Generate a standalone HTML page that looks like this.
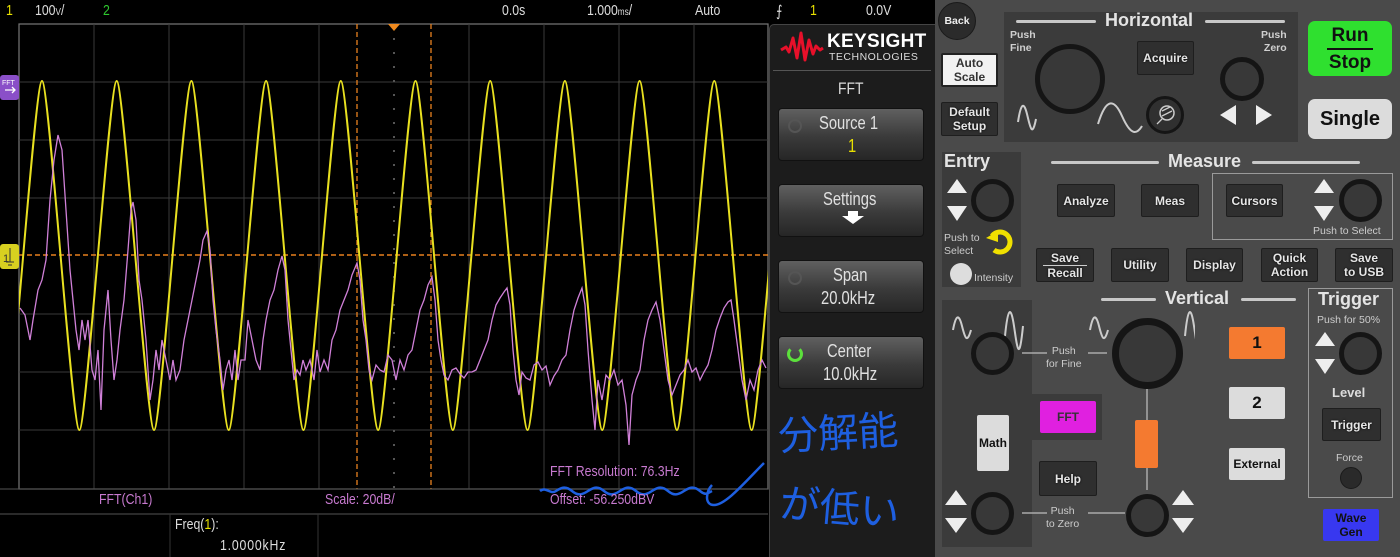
<!DOCTYPE html>
<html><head><meta charset="utf-8"><style>
*{margin:0;padding:0;box-sizing:border-box}
body{width:1400px;height:557px;overflow:hidden;background:#000;position:relative;font-family:"Liberation Sans",sans-serif}
.a{position:absolute}
.t{position:absolute;white-space:nowrap;font-family:"Liberation Sans",sans-serif;transform-origin:0 0;transform:scaleX(.82);font-size:15px}
.cp{position:absolute;left:935px;top:0;width:465px;height:557px;background:#4a4a4a}
.sub{position:absolute;background:#3b3b3b}
.btn{position:absolute;background:#2f2f2f;border:1px solid #1e1e1e;color:#e6e6e6;font-weight:bold;font-size:12px;display:flex;align-items:center;justify-content:center;text-align:center;line-height:14px;text-shadow:0 0 2px #000;border-radius:2px}
.k{position:absolute;border-radius:50%;background:#383838;border:5px solid #151515}
.lb{position:absolute;color:#cfcfcf;font-size:10.5px;font-weight:bold;text-align:center;line-height:13px;white-space:nowrap}
.ttl{position:absolute;color:#e4e4e4;font-weight:bold;font-size:18px;white-space:nowrap}
.ln{position:absolute;height:3px;background:#c8c8c8;border-radius:2px}
.sk{position:absolute;left:778px;width:146px;height:53px;border-radius:4px;background:linear-gradient(#606060,#3a3a3a 55%,#262626);border:1px solid #111;color:#e0e0e0;text-align:center;font-size:17px}
</style></head><body>

<!-- top bar -->
<div class="t" style="left:6px;top:2px;color:#e8e000">1</div>
<div class="t" style="left:35px;top:2px;color:#ddd">100<span style="font-size:10px">V</span>/</div>
<div class="t" style="left:103px;top:2px;color:#2ec82e">2</div>
<div class="t" style="left:502px;top:2px;color:#ddd">0.0s</div>
<div class="t" style="left:587px;top:2px;color:#ddd">1.000<span style="font-size:10px">ms</span>/</div>
<div class="t" style="left:695px;top:2px;color:#ddd">Auto</div>
<div class="t" style="left:776px;top:2px;color:#ddd">&#x2A0D;</div>
<div class="t" style="left:810px;top:2px;color:#e8e000">1</div>
<div class="t" style="left:866px;top:2px;color:#ddd">0.0V</div>

<svg class="a" style="left:0;top:0" width="935" height="557">
<defs><clipPath id="g"><rect x="19" y="24" width="749" height="465"/></clipPath></defs>
<rect x="19" y="24" width="749" height="465" fill="#000" stroke="#777" stroke-width="1.2"/>
<g stroke="#3a3a3a" stroke-width="1">
<path d="M94 24V489M169 24V489M244 24V489M319 24V489M469 24V489M544 24V489M619 24V489M694 24V489"/>
<path d="M19 82H768M19 140H768M19 198H768M19 314H768M19 372H768M19 430H768"/>
</g>
<path d="M394 24V489" stroke="#555" stroke-width="2" stroke-dasharray="2 12"/>
<path d="M19 255H768" stroke="#e8801e" stroke-width="1.5" stroke-dasharray="5 3"/>
<path d="M357 24V489M431 24V489" stroke="#e8801e" stroke-width="1.3" stroke-dasharray="5 3"/>
<path d="M388 24L400 24L394 31Z" fill="#f08a1e"/>
<g clip-path="url(#g)">
<path fill="none" stroke="#e8e020" stroke-width="2" d="M4.65 430 c7 0 30 -349 37.35 -349 c7 0 30 349 37.35 349 c7 0 30 -349 37.35 -349 c7 0 30 349 37.35 349 c7 0 30 -349 37.35 -349 c7 0 30 349 37.35 349 c7 0 30 -349 37.35 -349 c7 0 30 349 37.35 349 c7 0 30 -349 37.35 -349 c7 0 30 349 37.35 349 c7 0 30 -349 37.35 -349 c7 0 30 349 37.35 349 c7 0 30 -349 37.35 -349 c7 0 30 349 37.35 349 c7 0 30 -349 37.35 -349 c7 0 30 349 37.35 349 c7 0 30 -349 37.35 -349 c7 0 30 349 37.35 349 c7 0 30 -349 37.35 -349 c7 0 30 349 37.35 349 c7 0 30 -349 37.35 -349"/>
<polyline fill="none" stroke="#d080d8" stroke-width="1.3" points="20,308 25,315 30,340 33,320 38,290 42,280 46,260 50,200 54,160 58,135 62,150 66,210 70,270 73,300 76,330 79,350 82,320 85,340 88,320 92,370 95,380 98,350 101,410 104,330 108,290 111,340 114,380 117,360 120,330 124,300 128,250 131,210 133,202 136,220 139,280 142,300 146,340 150,400 153,380 156,350 159,370 162,340 166,360 170,380 173,360 176,380 180,370 184,340 188,320 192,300 196,280 200,260 203,240 207,231 210,250 213,300 216,330 220,360 223,390 226,370 229,360 232,380 235,350 238,380 241,360 245,360 248,320 252,340 256,360 260,370 263,340 266,320 270,300 274,290 278,270 282,256 285,270 288,320 291,350 294,380 297,370 300,375 303,360 306,370 310,360 314,380 317,350 320,372 324,360 328,370 332,340 336,330 340,310 344,300 348,290 352,275 357,263 360,280 363,320 366,340 369,370 372,380 376,365 380,370 384,372 388,355 392,360 396,380 400,360 404,370 408,355 412,350 416,330 420,310 424,300 428,285 432,277 435,300 438,340 441,360 444,375 448,380 452,370 456,368 460,374 464,378 468,372 472,372 476,370 480,360 484,350 488,340 492,320 496,305 500,298 504,292 507,288 510,305 513,350 516,380 519,395 522,372 526,378 530,380 534,365 538,362 542,370 546,366 550,385 554,376 558,370 562,360 566,355 570,330 574,310 578,298 582,288 585,305 588,350 592,400 595,430 598,380 602,400 606,375 610,380 614,370 618,385 622,380 626,405 629,445 632,395 636,380 640,370 644,340 648,320 652,310 656,302 660,320 664,350 668,380 672,395 676,385 680,375 684,370 688,360 692,372 696,368 700,380 704,372 708,365 712,350 716,330 720,318 724,308 728,302 731,300 734,320 738,350 742,380 746,400 750,380 754,390 758,370 762,360 766,368"/>
</g>
<!-- markers -->
<rect x="0" y="75" width="19" height="25" rx="3" fill="#8a4fc8"/>
<path d="M5 90H15M12 87L15 90L12 93" stroke="#fff" stroke-width="1.3" fill="none"/>
<text x="2" y="85" font-size="7" fill="#fff" font-family="Liberation Sans">FFT</text>
<rect x="0" y="244" width="19" height="25" rx="3" fill="#d8d020"/>
<text x="3" y="262" font-size="11" fill="#333" font-family="Liberation Sans">1</text>
<path d="M10 248V262M6 262H14M8 265H12" stroke="#333" stroke-width="1"/>
<!-- bottom rows -->
<path d="M0 489H768M0 514H768" stroke="#555" stroke-width="1"/>
<path d="M170 514V557M318 514V557" stroke="#333"/>
<!-- blue handwriting squiggle -->
<path d="M540 491c6-5 10 4 16 0s10-5 16 0 10 4 16 0 10-5 16 0 10 4 16 0 10-5 16 0 10 4 16 0 10-5 16 0 10 4 16 0 10-5 16 0 8 2 12 0" stroke="#1e5fe0" stroke-width="2.5" fill="none"/>
<path d="M712 485c-6 6-8 20 2 20 12 0 32-24 50-42" stroke="#1e5fe0" stroke-width="2.5" fill="none"/>
</svg>

<div class="t" style="left:550px;top:463px;color:#c87ad0;font-size:15px">FFT Resolution: 76.3Hz</div>
<div class="t" style="left:99px;top:491px;color:#c87ad0">FFT(Ch1)</div>
<div class="t" style="left:325px;top:491px;color:#c87ad0">Scale: 20dB/</div>
<div class="t" style="left:550px;top:491px;color:#c87ad0">Offset: -56.250dBV</div>
<div class="t" style="left:175px;top:516px;color:#ddd">Freq(<span style="color:#e8e000">1</span>):</div>
<div class="t" style="left:220px;top:537px;color:#ddd;letter-spacing:1px">1.0000kHz</div>

<!-- softkey panel -->
<div class="a" style="left:769px;top:24px;width:166px;height:533px;background:#1c1c1c;border-left:1px solid #444;border-top:1px solid #444;border-radius:5px 0 0 0"></div>
<svg class="a" style="left:780px;top:30px" width="44" height="34"><path d="M1 20L6 17L9 22L13 8L17 28L21 3L25 30L29 10L33 24L36 16L40 20L43 18" stroke="#e8102a" stroke-width="3" fill="none" stroke-linejoin="round"/></svg>
<div class="a" style="left:827px;top:31px;color:#fff;font-weight:bold;font-size:19px;letter-spacing:0.3px">KEYSIGHT</div>
<div class="a" style="left:829px;top:51px;color:#ddd;font-size:10.5px;letter-spacing:0.5px">TECHNOLOGIES</div>
<div class="a" style="left:773px;top:70px;width:158px;height:1px;background:#555"></div>
<div class="t" style="left:838px;top:79px;color:#ddd;font-size:17px">FFT</div>
<div class="sk" style="top:108px"><div class="t" style="left:40px;top:4px;font-size:18px">Source 1</div><div class="t" style="left:69px;top:27px;font-size:18px;color:#e8e000">1</div><div class="a" style="left:9px;top:10px;width:14px;height:14px;border:2px solid #555;border-radius:50%"></div></div>
<div class="sk" style="top:184px"><div class="t" style="left:44px;top:4px;font-size:18px">Settings</div><div class="a" style="left:63px;top:31px;width:0;height:0;border-left:11px solid transparent;border-right:11px solid transparent;border-top:8px solid #fff"></div><div class="a" style="left:69px;top:26px;width:10px;height:6px;background:#fff"></div></div>
<div class="sk" style="top:260px"><div class="t" style="left:54px;top:4px;font-size:18px">Span</div><div class="t" style="left:42px;top:27px;font-size:18px">20.0kHz</div><div class="a" style="left:9px;top:10px;width:14px;height:14px;border:2px solid #555;border-radius:50%"></div></div>
<div class="sk" style="top:336px"><div class="t" style="left:48px;top:4px;font-size:18px">Center</div><div class="t" style="left:44px;top:27px;font-size:18px">10.0kHz</div><div class="a" style="left:8px;top:9px;width:16px;height:16px;border:3px solid #5ce03c;border-top-color:transparent;border-radius:50%"></div></div>
<div class="a" style="left:778px;top:405px;color:#1e5fe0;font-family:'Noto Sans CJK JP',sans-serif;font-size:40px;line-height:50px;transform:rotate(-3deg)">分解能</div>
<div class="a" style="left:780px;top:480px;color:#1e5fe0;font-family:'Noto Sans CJK JP',sans-serif;font-size:40px;line-height:50px;transform:rotate(5deg)">が低い</div>

<!-- control panel -->
<div class="cp"></div>
<div class="a" style="left:938px;top:2px;width:38px;height:38px;border-radius:50%;background:#2b2b2b;border:1px solid #1a1a1a"></div>
<div class="lb" style="left:938px;top:15px;width:38px;color:#eee">Back</div>
<div class="btn" style="left:941px;top:53px;width:57px;height:34px;background:#f2f2f2;color:#333;text-shadow:none;border:2px solid #222">Auto<br>Scale</div>
<div class="btn" style="left:941px;top:102px;width:57px;height:34px">Default<br>Setup</div>

<div class="sub" style="left:1004px;top:12px;width:294px;height:130px"></div>
<div class="ln" style="left:1016px;top:20px;width:80px"></div><div class="ln" style="left:1205px;top:20px;width:80px"></div>
<div class="ttl" style="left:1105px;top:10px">Horizontal</div>
<div class="lb" style="left:1010px;top:29px;text-align:left">Push<br>Fine</div>
<div class="k" style="left:1035px;top:44px;width:70px;height:70px"></div>
<div class="btn" style="left:1137px;top:41px;width:57px;height:34px">Acquire</div>
<div class="lb" style="left:1261px;top:29px;text-align:right">Push<br>Zero</div>
<div class="k" style="left:1220px;top:57px;width:44px;height:44px"></div>
<div class="k" style="left:1146px;top:96px;width:38px;height:38px;border-width:3px;background:#303030"></div>
<svg class="a" style="left:1004px;top:12px" width="294" height="130">
<path d="M14 110c3-20 6-20 9-8s5 25 9 5" stroke="#ccc" stroke-width="2" fill="none"/>
<path d="M94 112c8-26 16-26 24-8s14 20 20 10" stroke="#ccc" stroke-width="2" fill="none"/>
<circle cx="163" cy="101" r="7" stroke="#ccc" stroke-width="1.5" fill="none"/><path d="M158 107l-5 5M158 99l8-4M158 104l10-5" stroke="#ccc" stroke-width="1.3"/>
<path d="M216 103l16-10v20z M252 93l16 10-16 10z" fill="#eee"/>
</svg>
<div class="a" style="left:1308px;top:21px;width:84px;height:55px;background:#2fe02f;border-radius:7px"></div>
<div class="a" style="left:1308px;top:24px;width:84px;text-align:center;font-weight:bold;font-size:19px;line-height:23px;color:#111">Run<div style="height:2px;background:#111;width:46px;margin:1px auto"></div>Stop</div>
<div class="a" style="left:1308px;top:99px;width:84px;height:40px;background:#dcdcdc;border-radius:7px;text-align:center;font-weight:bold;font-size:20px;line-height:40px;color:#111">Single</div>

<!-- Entry -->
<div class="sub" style="left:942px;top:152px;width:79px;height:135px"></div>
<div class="ttl" style="left:944px;top:151px">Entry</div>
<svg class="a" style="left:946px;top:178px" width="22" height="46"><path d="M1 15L11 1L21 15Z M1 28L21 28L11 43Z" fill="#eee"/></svg>
<div class="k" style="left:971px;top:179px;width:43px;height:43px"></div>
<div class="lb" style="left:944px;top:232px;text-align:left;font-weight:normal;color:#ccc;font-size:10.5px">Push to<br>Select</div>
<svg class="a" style="left:986px;top:228px" width="30" height="30"><path d="M6 8A10 10 0 1 1 8 22" stroke="#f0e000" stroke-width="5" fill="none"/><path d="M0 10L12 3L12 14Z" fill="#f0e000"/></svg>
<div class="a" style="left:950px;top:263px;width:22px;height:22px;border-radius:50%;background:#ddd"></div>
<div class="lb" style="left:974px;top:272px;font-weight:normal;color:#ccc">Intensity</div>

<!-- Measure -->
<div class="ln" style="left:1051px;top:161px;width:108px"></div><div class="ln" style="left:1252px;top:161px;width:108px"></div>
<div class="ttl" style="left:1168px;top:151px">Measure</div>
<div class="btn" style="left:1057px;top:184px;width:58px;height:33px">Analyze</div>
<div class="btn" style="left:1141px;top:184px;width:58px;height:33px">Meas</div>
<div class="a" style="left:1212px;top:173px;width:181px;height:67px;border:1.5px solid #9a9a9a"></div>
<div class="btn" style="left:1226px;top:184px;width:57px;height:33px">Cursors</div>
<svg class="a" style="left:1313px;top:178px" width="22" height="46"><path d="M1 15L11 1L21 15Z M1 28L21 28L11 43Z" fill="#eee"/></svg>
<div class="k" style="left:1339px;top:179px;width:43px;height:43px"></div>
<div class="lb" style="left:1313px;top:225px;font-weight:normal;color:#ccc">Push to Select</div>
<div class="btn" style="left:1036px;top:248px;width:58px;height:34px;flex-direction:column">Save<div style="height:1px;width:44px;background:#ccc"></div>Recall</div>
<div class="btn" style="left:1111px;top:248px;width:58px;height:34px">Utility</div>
<div class="btn" style="left:1186px;top:248px;width:57px;height:34px">Display</div>
<div class="btn" style="left:1261px;top:248px;width:57px;height:34px">Quick<br>Action</div>
<div class="btn" style="left:1335px;top:248px;width:58px;height:34px">Save<br>to USB</div>

<!-- Vertical -->
<div class="ln" style="left:1101px;top:298px;width:55px"></div><div class="ln" style="left:1241px;top:298px;width:55px"></div>
<div class="ttl" style="left:1165px;top:288px">Vertical</div>
<div class="sub" style="left:942px;top:300px;width:90px;height:247px"></div>
<div class="sub" style="left:1032px;top:394px;width:70px;height:46px"></div>
<svg class="a" style="left:935px;top:300px" width="260" height="257">
<path d="M18 30c3-16 6-16 9-4s5 18 9 4" stroke="#ccc" stroke-width="2" fill="none"/>
<path d="M70 36c3-30 6-30 9-10s5 40 9 0" stroke="#ccc" stroke-width="2" fill="none"/>
<path d="M155 30c3-16 6-16 9-4s5 18 9 4" stroke="#ccc" stroke-width="2" fill="none"/>
<path d="M250 36c3-30 6-30 9-10s5 40 9 0" stroke="#ccc" stroke-width="2" fill="none"/>
<path d="M87 53H112M153 53H172M87 213H112M153 213H190M212 80V190" stroke="#aaa" stroke-width="1.5"/>
<path d="M10 205L21 190L32 205Z M10 218L32 218L21 233Z M237 205L248 190L259 205Z M237 218L259 218L248 233Z" fill="#eee"/>
</svg>
<div class="k" style="left:971px;top:332px;width:43px;height:43px"></div>
<div class="lb" style="left:1046px;top:345px;font-weight:normal;color:#ccc">Push<br>for Fine</div>
<div class="k" style="left:1112px;top:318px;width:71px;height:71px;border-width:7px"></div>
<div class="btn" style="left:977px;top:415px;width:32px;height:56px;background:#dcdcdc;color:#111;text-shadow:none;border:none">Math</div>
<div class="btn" style="left:1040px;top:401px;width:56px;height:32px;background:#e020e0;color:#333;text-shadow:none;border:none">FFT</div>
<div class="btn" style="left:1039px;top:461px;width:58px;height:35px">Help</div>
<div class="a" style="left:1135px;top:420px;width:23px;height:48px;background:#f47a30;border-radius:2px"></div>
<div class="k" style="left:971px;top:492px;width:43px;height:43px"></div>
<div class="lb" style="left:1046px;top:505px;font-weight:normal;color:#ccc">Push<br>to Zero</div>
<div class="k" style="left:1126px;top:494px;width:43px;height:43px"></div>
<div class="btn" style="left:1229px;top:327px;width:56px;height:32px;background:#f47a30;color:#111;font-size:17px;border:none;text-shadow:none">1</div>
<div class="btn" style="left:1229px;top:387px;width:56px;height:32px;background:#dcdcdc;color:#111;font-size:17px;border:none;text-shadow:none">2</div>
<div class="btn" style="left:1229px;top:448px;width:56px;height:32px;background:#dcdcdc;color:#111;border:none;text-shadow:none">External</div>

<!-- Trigger -->
<div class="a" style="left:1308px;top:288px;width:85px;height:210px;border:1.5px solid #9a9a9a"></div>
<div class="ttl" style="left:1318px;top:289px">Trigger</div>
<div class="lb" style="left:1317px;top:314px;font-weight:normal;color:#ccc">Push for 50%</div>
<svg class="a" style="left:1314px;top:331px" width="22" height="46"><path d="M1 15L11 1L21 15Z M1 28L21 28L11 43Z" fill="#eee"/></svg>
<div class="k" style="left:1339px;top:332px;width:43px;height:43px"></div>
<div class="lb" style="left:1332px;top:386px;font-size:13px;color:#ddd">Level</div>
<div class="btn" style="left:1322px;top:408px;width:59px;height:33px">Trigger</div>
<div class="lb" style="left:1336px;top:452px;font-weight:normal;color:#ccc">Force</div>
<div class="a" style="left:1340px;top:467px;width:22px;height:22px;border-radius:50%;background:#2a2a2a;border:1px solid #1a1a1a"></div>
<div class="btn" style="left:1323px;top:509px;width:56px;height:32px;background:#3838f0;color:#111;border:none;text-shadow:none">Wave<br>Gen</div>
</body></html>
